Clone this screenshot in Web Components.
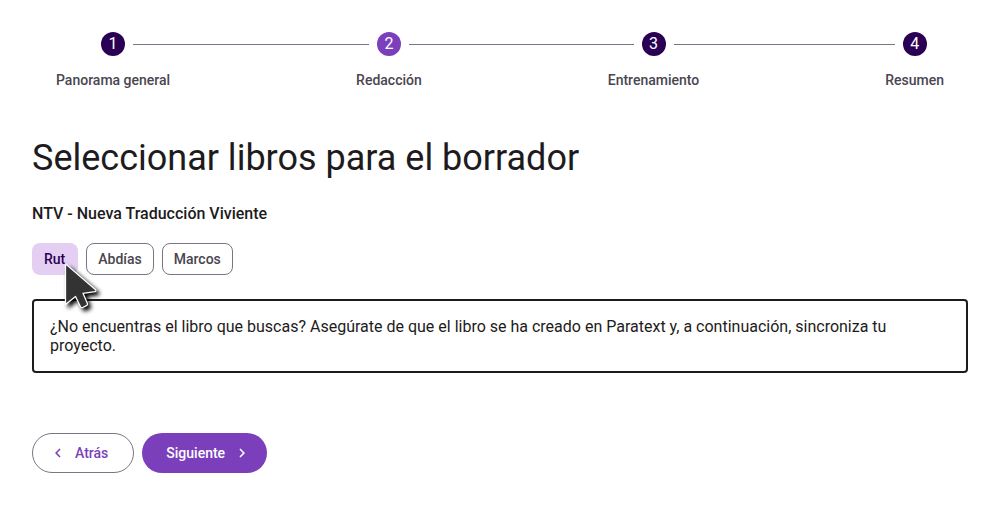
<!DOCTYPE html>
<html lang="es">
<head>
<meta charset="utf-8">
<meta name="viewport" content="width=device-width, initial-scale=1">
<title>Seleccionar libros para el borrador</title>
<style>
  :root {
    --primary: #7b3fbc;
    --primary-dark: #2a0054;
    --selected: #e4cff3;
    --outline: #7b7485;
    --text: #1d1b20;
    --text-muted: #4a4550;
  }
  body {
    margin: 0;
    background: #fff;
    color: var(--text);
    font: 400 16px/20px Roboto, sans-serif;
  }
</style>
</head>
<body>
<draft-page></draft-page>

<script>
class DraftStep extends HTMLElement {
  connectedCallback() {
    const root = this.attachShadow({ mode: "open" });
    root.innerHTML = `
      <style>
        :host { display: block; flex: none; }
        .track { display: flex; align-items: center; gap: 8px; }
        .track::before, .track::after { content: ""; flex: 1; height: 1px; background: var(--outline); }
        :host(:first-child) .track::before, :host(:last-child) .track::after { background: none; }
        .number {
          flex: none; width: 24px; height: 24px; border-radius: 50%;
          background: var(--primary-dark); color: #fff;
          font-size: 16px; line-height: 24px; text-align: center;
        }
        :host([active]) .number { background: var(--primary); }
        .label {
          padding: 14px 24px 0; text-align: center; color: var(--text-muted);
          font-size: 14px; font-weight: 500; line-height: 20px;
        }
      </style>
      <div class="track"><span class="number">${this.getAttribute("number")}</span></div>
      <div class="label"><slot></slot></div>`;
  }
}

class DraftStepper extends HTMLElement {
  connectedCallback() {
    const root = this.attachShadow({ mode: "open" });
    root.innerHTML = `
      <style>
        :host { display: block; }
        nav { display: flex; }
        i { flex: 1; height: 1px; margin-top: 12px; background: var(--outline); }
      </style>
      <nav aria-label="Pasos"></nav>`;
    const nav = root.querySelector("nav");
    const labels = this.getAttribute("steps").split("|");
    const active = Number(this.getAttribute("active"));
    nav.innerHTML = labels.map((label, i) =>
      `<draft-step number="${i + 1}" ${i + 1 === active ? "active" : ""}>${label}</draft-step>`
    ).join("<i></i>");
  }
}

class BookChip extends HTMLElement {
  connectedCallback() {
    const selected = this.hasAttribute("selected");
    const root = this.attachShadow({ mode: "open" });
    root.innerHTML = `
      <style>
        :host { display: block; }
        button {
          display: block; height: 32px; padding: 0 11px; box-sizing: border-box;
          border: 1px solid var(--outline); border-radius: 8px; background: #fff;
          color: var(--text-muted); font: 500 14px/20px Roboto, sans-serif;
        }
        button[aria-pressed="true"] {
          padding: 0 13px 0 12px; border: 0; background: var(--selected); color: var(--primary-dark);
        }
      </style>
      <button type="button" aria-pressed="${selected}"><slot></slot></button>`;
  }
}

class AppNotice extends HTMLElement {
  connectedCallback() {
    const root = this.attachShadow({ mode: "open" });
    root.innerHTML = `
      <style>
        :host {
          display: block; padding: 16px; border: 2px solid var(--text); border-radius: 4px;
          font-size: 16px; line-height: 19px;
        }
      </style>
      <slot></slot>`;
  }
}

class NavButton extends HTMLElement {
  connectedCallback() {
    const root = this.attachShadow({ mode: "open" });
    root.innerHTML = `
      <style>
        :host { display: block; }
        button {
          display: flex; align-items: center; gap: 8px; height: 40px; padding: 0 16px 0 24px;
          box-sizing: border-box; border: 0; border-radius: 20px;
          background: var(--primary); color: #fff; font: 500 14px/20px Roboto, sans-serif;
        }
        :host([back]) button {
          flex-direction: row-reverse; padding: 0 25px 0 16px;
          border: 1px solid var(--outline); background: #fff; color: var(--primary);
        }
        svg { width: 18px; height: 18px; fill: currentColor; }
        :host([back]) svg { transform: scaleX(-1); }
      </style>
      <button type="button"><slot></slot>
        <svg viewBox="0 0 24 24" aria-hidden="true"><path d="M10 6 8.590 7.410 13.170 12l-4.580 4.590L10 18l6-6z"/></svg>
      </button>`;
  }
}

class PointerArrow extends HTMLElement {
  connectedCallback() {
    const root = this.attachShadow({ mode: "open" });
    root.innerHTML = `
      <style>
        :host { display: block; pointer-events: none; }
        svg { display: block; overflow: visible; filter: drop-shadow(3px 3px 2px #000); }
      </style>
      <svg width="34" height="48" viewBox="0 0 34 48" aria-hidden="true">
        <path d="M2.500 2.500V41.500L12.500 33.500L17.500 43.700Q18.200 45 19.700 44.500L23.500 42.700Q25 42 24.400 40.500L20 30.300L32 28.700Q33.600 28 32.600 26.800L4.200 2.200Q2.900 1.300 2.500 2.500Z" fill="#333" stroke="#fff" stroke-width="1.300" stroke-linejoin="round"/>
      </svg>`;
  }
}

class DraftPage extends HTMLElement {
  connectedCallback() {
    const root = this.attachShadow({ mode: "open" });
    root.innerHTML = `
      <style>
        :host { display: block; padding: 32px; }
        h1 { margin: 44px 0 0; font-size: 36px; font-weight: 400; line-height: 48px; }
        h2 { margin: 22px 0 0; font-size: 16px; font-weight: 500; line-height: 20px; }
        .chips { display: flex; gap: 8px; margin-top: 19px; }
        .pointed { position: relative; }
        pointer-arrow { position: absolute; left: 31px; top: 20px; z-index: 1; }
        app-notice { margin-top: 24px; }
        .actions { display: flex; gap: 8px; margin-top: 60px; }
      </style>
      <draft-stepper active="2" steps="Panorama general|Redacción|Entrenamiento|Resumen"></draft-stepper>
      <main>
        <h1>Seleccionar libros para el borrador</h1>
        <h2>NTV - Nueva Traducción Viviente</h2>
        <div class="chips">
          <div class="pointed"><book-chip selected>Rut</book-chip><pointer-arrow></pointer-arrow></div>
          <book-chip>Abdías</book-chip>
          <book-chip>Marcos</book-chip>
        </div>
        <app-notice>¿No encuentras el libro que buscas? Asegúrate de que el libro se ha creado en Paratext y, a continuación, sincroniza tu proyecto.</app-notice>
        <div class="actions">
          <nav-button back>Atrás</nav-button>
          <nav-button>Siguiente</nav-button>
        </div>
      </main>`;
  }
}

customElements.define("draft-step", DraftStep);
customElements.define("draft-stepper", DraftStepper);
customElements.define("book-chip", BookChip);
customElements.define("app-notice", AppNotice);
customElements.define("nav-button", NavButton);
customElements.define("pointer-arrow", PointerArrow);
customElements.define("draft-page", DraftPage);
</script>
</body>
</html>
